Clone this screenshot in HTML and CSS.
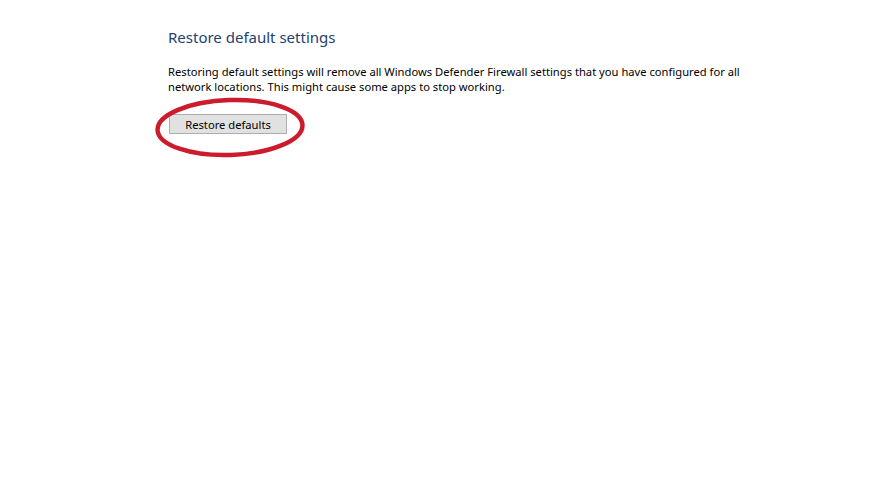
FILE: index.html
```html
<!DOCTYPE html>
<html>
<head>
<meta charset="utf-8">
<link rel="stylesheet" href="styles.css">
</head>
<body>
<main class="page">
  <h1 class="title">Restore default settings</h1>
  <p class="desc">Restoring default settings will remove all Windows Defender Firewall settings that you have configured for all<br>network locations. This might cause some apps to stop working.</p>
  <div class="action">
    <button class="btn">Restore defaults</button>
    <svg class="circle" viewBox="0 0 154 62"><ellipse cx="77" cy="29.5" rx="72.5" ry="27.5" fill="none" stroke="#cc1b2b" stroke-width="4.5" transform="rotate(-2 77 29.5)"/></svg>
  </div>
</main>
</body>
</html>
```
FILE: styles.css
```css
html, body { margin: 0; background: #fff; min-height: 100%; }
.page {
  padding: 26px 0 0 168px;
  font-family: "Segoe UI", "Noto Sans", "Open Sans", sans-serif;
}
.title {
  margin: 0;
  font-weight: normal;
  font-size: 15px;
  line-height: 22px;
  color: #1e3f6f;
}
.desc {
  margin: 16px 0 0 0;
  font-size: 11.2px;
  line-height: 15px;
  color: #000;
}
.action {
  position: relative;
  margin-top: 20px;
  height: 60px;
}
.btn {
  display: block;
  margin-left: 1px;
  width: 118px;
  height: 20px;
  padding: 0;
  background: #e1e1e1;
  border: 1px solid #adadad;
  font-family: inherit;
  font-size: 11.2px;
  color: #000;
}
.circle {
  position: absolute;
  display: block;
  left: -15px;
  top: -16px;
  width: 154px;
  height: 62px;
  overflow: visible;
  z-index: 1;
}
```
